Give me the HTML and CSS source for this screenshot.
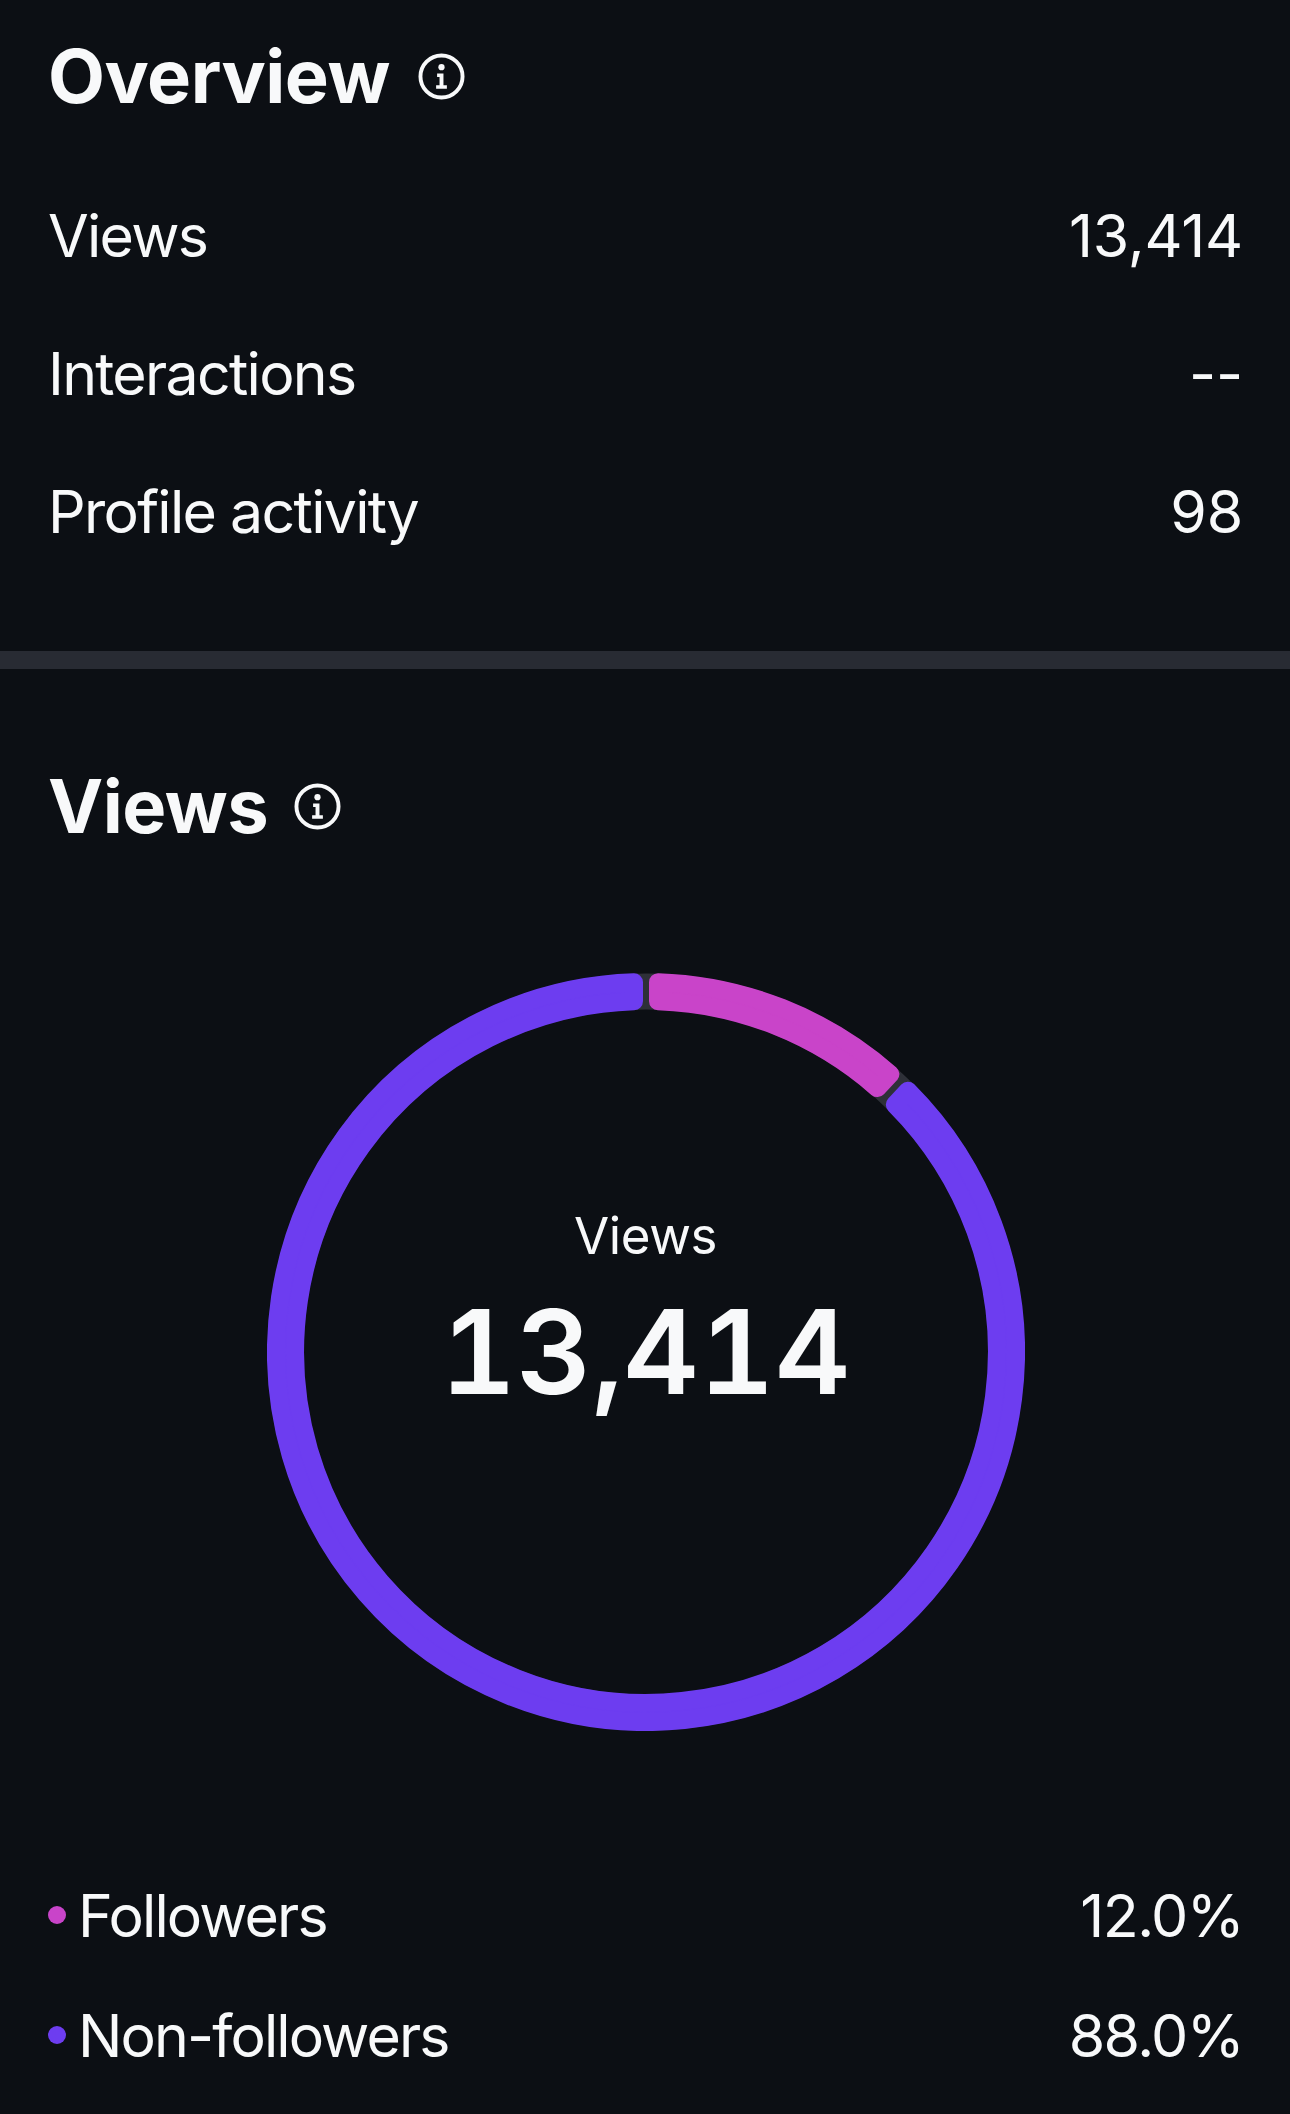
FILE: index.html
```html
<!DOCTYPE html>
<html lang="en">
<head>
  <meta charset="UTF-8">
  <meta name="viewport" content="width=device-width, initial-scale=1.0">
  <title>Insights</title>
  <link rel="stylesheet" href="styles.css">
</head>
<body>
<section class="overview">
  <div class="heading">
    <h2>Overview</h2>
    <svg class="info" viewBox="0 0 48 48"><circle cx="24" cy="24" r="21.5" fill="none" stroke="currentColor" stroke-width="4"/><circle cx="24" cy="14.5" r="3.2" fill="currentColor"/><path d="M19.5 21h6.5v12h3.5v3.5h-11V33H22v-8.500h-2.500z" fill="currentColor"/></svg>
  </div>
  <div class="row"><span class="row-label">Views</span><span class="row-value">13,414</span></div>
  <div class="row"><span class="row-label">Interactions</span><span class="row-value">--</span></div>
  <div class="row"><span class="row-label">Profile activity</span><span class="row-value">98</span></div>
</section>

<div class="divider"></div>

<section class="views">
  <div class="heading">
    <h2>Views</h2>
    <svg class="info" viewBox="0 0 48 48"><circle cx="24" cy="24" r="21.5" fill="none" stroke="currentColor" stroke-width="4"/><circle cx="24" cy="14.5" r="3.2" fill="currentColor"/><path d="M19.5 21h6.5v12h3.5v3.500h-11V33H22v-8.500h-2.500z" fill="currentColor"/></svg>
  </div>

  <div class="donut">
    <svg class="ring" viewBox="0 0 756 756">
      <circle cx="378" cy="378" r="359.500" fill="none" stroke="#2e3038" stroke-width="36"/>
      <path class="seg seg-followers" d="M390 9.2A369 369 0 0 1 621.72 100.93L608.71 114.79A350 350 0 0 0 390 28.21Z"/>
      <path class="seg seg-others" d="M639.21 117.37A369 369 0 1 1 366 9.2L366 28.21A350 350 0 1 0 626.2 131.23Z"/>
    </svg>
    <div class="donut-label">
      <div class="donut-title">Views</div>
      <div class="donut-value">13,414</div>
    </div>
  </div>

  <div class="legend">
    <div class="legend-row">
      <span class="legend-name"><i class="dot dot-followers"></i>Followers</span>
      <span class="legend-value">12.0%</span>
    </div>
    <div class="legend-row">
      <span class="legend-name"><i class="dot dot-others"></i>Non-followers</span>
      <span class="legend-value">88.0%</span>
    </div>
  </div>
</section>
</body>
</html>
```

FILE: styles.css
```css
body {
  margin: 0;
  background: #0c0f14;
  color: #f8f9fa;
  font-family: Inter, "Liberation Sans", sans-serif;
  height: 2114px;
  overflow: hidden;
}
.overview {
  padding: 30px 47px 0 48px;
  height: 621px;
  box-sizing: border-box;
}
.views {
  padding: 91px 47px 0 48px;
}
.heading {
  display: flex;
  align-items: center;
  gap: 28px;
  height: 92px;
}
.views .heading {
  gap: 26px;
}
h2 {
  margin: 0;
  font-size: 74px;
  line-height: 92px;
  font-weight: 700;
  letter-spacing: -0.5px;
}
.info {
  width: 47px;
  height: 47px;
}
.overview .heading {
  margin-bottom: 44px;
}
.row {
  display: flex;
  justify-content: space-between;
  align-items: center;
  height: 138px;
  font-size: 59px;
  font-weight: 400;
}
.row-label {
  letter-spacing: -1.7px;
}
.row-value {
  letter-spacing: -0.2px;
}
.divider {
  height: 18px;
  margin-top: 30px;
  background: #282b33;
}
.donut {
  position: relative;
  width: 758px;
  height: 758px;
  margin: 121px auto 0;
}
.ring {
  display: block;
  width: 758px;
  height: 758px;
}
.seg {
  stroke-width: 18;
  stroke-linejoin: round;
}
.seg-followers {
  fill: #c944c9;
  stroke: #c944c9;
}
.seg-others {
  fill: #6d3df0;
  stroke: #6d3df0;
}
.donut-label {
  position: absolute;
  inset: 0 0 81px;
  display: flex;
  flex-direction: column;
  align-items: center;
  justify-content: center;
}
.donut-title {
  font-size: 51px;
  line-height: 60px;
  font-weight: 400;
  letter-spacing: -0.4px;
  margin-bottom: 21px;
}
.donut-value {
  font-size: 117px;
  line-height: 130px;
  font-weight: 600;
  font-feature-settings: "tnum";
}
.legend {
  margin-top: 124px;
}
.legend-row {
  display: flex;
  justify-content: space-between;
  align-items: center;
  height: 120px;
  font-size: 59px;
  font-weight: 400;
}
.legend-name {
  display: flex;
  align-items: center;
  letter-spacing: -1.9px;
}
.legend-value {
  letter-spacing: -1.6px;
}
.dot {
  width: 18px;
  height: 18px;
  border-radius: 50%;
  margin-right: 12px;
}
.dot-followers {
  background: #c944c9;
}
.dot-others {
  background: #6d3df0;
}
```
